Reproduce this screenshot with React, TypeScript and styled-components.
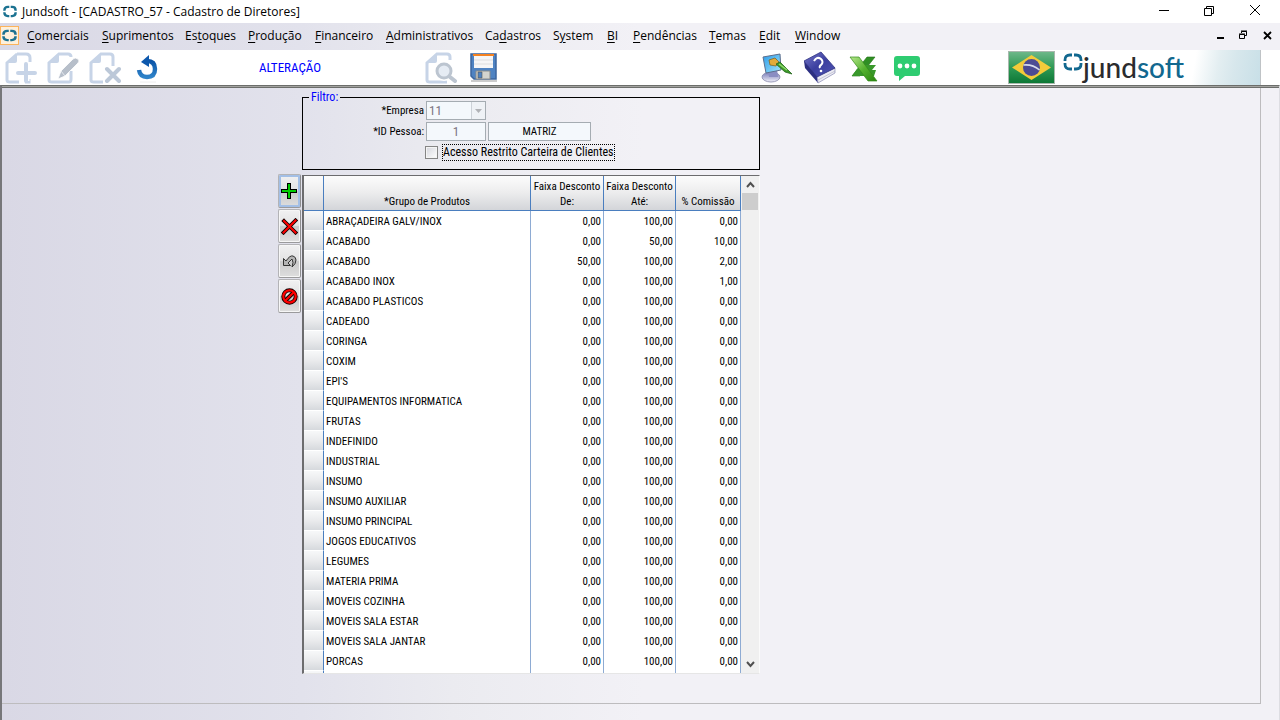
import React from "react";
import styled, { createGlobalStyle, css } from "styled-components";

const uiFont = `"Open Sans", "Noto Sans", sans-serif`;
const formFont = `"Roboto Condensed", "Liberation Sans Narrow", Arial, sans-serif`;

const GlobalStyle = createGlobalStyle`
  *, *::before, *::after { box-sizing: border-box; }
  body { margin: 0; background: #f2f1f6; color: #000; }
  button, input, select { margin: 0; padding: 0; font: inherit; color: inherit; border-radius: 0; }
`;

const shade = css`
  background: linear-gradient(90deg, #d9d8e5 0, #e2e2ec 300px, #ebebf0 450px, #f2f1f6 640px);
`;

const Window = styled.div`
  display: flex;
  flex-direction: column;
  min-height: 100vh;
`;

const TitleBar = styled.header`
  display: flex;
  align-items: center;
  height: 23px;
  padding: 0 18px 0 3px;
  background: #fff;
  font: 12px/16px ${uiFont};
`;

const Title = styled.h1`
  flex: 1;
  margin: 0 0 0 5px;
  font: inherit;
`;

const Controls = styled.div<{ $gap: number }>`
  display: flex;
  align-items: center;
  gap: ${(p) => p.$gap}px;
`;

const GlyphButton = styled.button`
  display: flex;
  width: 13px;
  height: 13px;
  border: 0;
  background: none;
`;

const MenuBar = styled.nav`
  ${shade}
  display: flex;
  align-items: center;
  height: 27px;
  padding: 0 6px 2px 0;
  font: 12px/16px ${uiFont};
`;

const MenuIcon = styled.button`
  display: flex;
  align-items: center;
  justify-content: center;
  width: 19px;
  height: 19px;
  border: 1px solid #fcb45c;
  background: #fdf0dc;
`;

const MenuList = styled.ul`
  display: flex;
  flex: 1;
  gap: 16px;
  margin: 0 0 0 8px;
  padding: 0;
  list-style: none;
`;

const MenuItem = styled.li<{ $width: number }>`
  width: ${(p) => p.$width}px;
  white-space: nowrap;
`;

const MenuLink = styled.a`
  color: #000;
  text-decoration: none;
  u { text-underline-offset: 2px; }
`;

const ToolBar = styled.div`
  display: flex;
  align-items: center;
  height: 35px;
  padding: 0 19px 0 5px;
  background: #fff;
`;

const ToolGroup = styled.div<{ $gap: number }>`
  display: flex;
  gap: ${(p) => p.$gap}px;
`;

const ToolButton = styled.button`
  display: flex;
  width: 32px;
  height: 34px;
  border: 0;
  background: none;
`;

const Status = styled.output`
  width: 262px;
  padding-right: 8px;
  color: #00f;
  font: 13px/16px ${formFont};
  text-align: center;
`;

const Spacer = styled.div`
  flex: 1;
`;

const Flag = styled.button`
  display: flex;
  width: 47px;
  height: 33px;
  margin: 0 7px 0 86px;
  border: 0;
  background: none;
`;

const Brand = styled.div`
  display: flex;
  width: 199px;
  height: 35px;
  padding: 2px 0 0 1px;
  border-right: 1px solid #bfc3c6;
  background: linear-gradient(100deg, #fff 66%, #e3eef1 78%, #d7e7ec 86%, #c8dfe7 100%);
`;

const BrandName = styled.span`
  color: #2b2b2d;
  font: 500 28px/30px "Lato", sans-serif;
  em { color: #12688f; font-style: normal; }
`;

const Workspace = styled.main`
  ${shade}
  display: flex;
  flex: 1;
  padding: 2px 18px 16px 0;
  border-top: 1px solid #6c6e6b;
  border-left: 2px solid #77777a;
  border-right: 1px solid #dddde2;
  box-shadow: inset 0 1px #a3a3a0, inset 0 2px #6c6e6b;
`;

const Page = styled.div`
  flex: 1;
  padding: 3px 0 29px 276px;
  border-right: 1px solid #bdbcbe;
  border-bottom: 1px solid #bdbcbe;
`;

const Form = styled.form`
  display: grid;
  grid-template-columns: 24px 458px;
  row-gap: 5px;
  font: 11px/14px ${formFont};
`;

const Filter = styled.fieldset`
  grid-column: 2;
  min-width: 0;
  height: 79px;
  margin: 0;
  padding: 0;
  border: 1px solid #000;
`;

const Legend = styled.legend`
  margin: 0 0 -3px 6px;
  padding: 0 2px;
  color: #00f;
  font-size: 12px;
  line-height: 12px;
`;

const FieldRow = styled.div`
  display: grid;
  grid-template-columns: 121px 60px 103px;
  column-gap: 2px;
  align-items: center;
  height: 21px;
`;

const FieldLabel = styled.label`
  text-align: right;
`;

const field = css`
  width: 100%;
  height: 19px;
  border: 1px solid #a5acb2;
  background: #f4f8fc;
`;

const TextField = styled.input<{ $dim?: boolean }>`
  ${field}
  text-align: center;
  color: ${(p) => (p.$dim ? "#7d7482" : "#000")};
  font-size: ${(p) => (p.$dim ? 13 : 11)}px;
`;

const SelectBox = styled.div`
  position: relative;
  display: flex;
`;

const Select = styled.select`
  ${field}
  appearance: none;
  padding-left: 2px;
  color: #7d7482;
  font-size: 13px;
  line-height: 16px;
  opacity: 1;
`;

const SelectArrow = styled.span`
  position: absolute;
  top: 1px;
  right: 1px;
  display: flex;
  align-items: center;
  justify-content: center;
  width: 14px;
  height: 17px;
  border-left: 1px solid #cdd2d8;
  background: #eff2f6;
  pointer-events: none;
`;

const CheckRow = styled.div`
  display: flex;
  align-items: center;
  gap: 4px;
  height: 20px;
  padding-left: 122px;
`;

const CheckBox = styled.input`
  appearance: none;
  width: 13px;
  height: 13px;
  border: 1px solid #858585;
  background: linear-gradient(135deg, #d4d5dc, #fff);
  box-shadow: inset 0 0 0 1px #f4f4f4;
`;

const CheckLabel = styled.label`
  width: 173px;
  height: 17px;
  border: 1px dotted #000;
  font-size: 12px;
  line-height: 15px;
  white-space: nowrap;
`;

const SideBar = styled.div`
  display: flex;
  flex-direction: column;
  gap: 1px;
  margin-top: -1px;
`;

const SideButton = styled.button<{ $active?: boolean }>`
  display: flex;
  align-items: center;
  justify-content: center;
  width: 23px;
  height: 34px;
  border: 1px solid #b3b3b6;
  border-right-color: #8e8e90;
  border-bottom-color: #9a9a9c;
  border-radius: 2px;
  background: linear-gradient(#f1f1f2 0, #e2e2e3 48%, #c9c9ca 52%, #dedede 100%);
  box-shadow: inset 0 0 0 ${(p) => (p.$active ? "2px #a3bfe6" : "1px #f6f6f6")};
`;

const Grid = styled.div`
  display: flex;
  height: 499px;
  border: 2px solid #6c6c6e;
  border-top-width: 1px;
  border-right: 1px solid #fbfbfb;
  border-bottom: 1px solid #e6e6e6;
  background: #fff;
  overflow: hidden;
`;

const TableView = styled.div`
  flex: 1;
  overflow: hidden;
`;

const Table = styled.table`
  width: 437px;
  border-spacing: 0;
  table-layout: fixed;
`;

const HeadCell = styled.th`
  height: 35px;
  padding: 2px 1px 1px;
  border-right: 1px solid #4a7ebf;
  border-bottom: 1px solid #4a7ebf;
  background: linear-gradient(#fcfcfc, #ececed 50%, #d3d5d9);
  font-weight: normal;
  line-height: 15px;
  text-align: center;
  vertical-align: bottom;
  white-space: nowrap;
`;

const Cell = styled.td<{ $number?: boolean }>`
  height: 20px;
  padding: 2px 2px 0;
  border-right: 1px solid #8eabd3;
  text-align: ${(p) => (p.$number ? "right" : "left")};
  white-space: nowrap;
`;

const Selector = styled.td`
  height: 20px;
  padding: 0;
  border-right: 1px solid #4a7ebf;
  border-bottom: 1px solid #fff;
  background: linear-gradient(#f7f8f9, #eaebed 50%, #d6d9dd);
`;

const ScrollBar = styled.div`
  display: flex;
  flex-direction: column;
  width: 18px;
  padding: 0 1px;
  background: #f0f0f0;
`;

const ScrollButton = styled.button`
  display: flex;
  align-items: center;
  justify-content: center;
  height: 17px;
  border: 0;
  background: none;
`;

const Thumb = styled.div`
  flex: 1;
  &::before {
    content: "";
    display: block;
    height: 17px;
    background: #cdcdcd;
  }
`;

function Ring({ width, height, stroke = 3.4, color = "#1b7291" }: { width: number; height: number; stroke?: number; color?: string }) {
  return (
    <svg width={width} height={height} viewBox="0 0 20 20" fill="none" stroke={color} strokeWidth={stroke} preserveAspectRatio="none">
      <path d="M9 3H7Q2 3 2 8V9M11 3h2q5 0 5 5v1M9 17H7q-5 0-5-5v-1M11 17h2q5 0 5-5v-1" />
    </svg>
  );
}

const NewIcon = () => (
  <svg width="32" height="34" viewBox="0 0 32 34">
    <path d="M12 3h9q4 0 4 4v4M12 3 2 12v17q0 2 3 2h9M20 31h4v-3" fill="none" stroke="#c7d4e7" strokeWidth="3" />
    <path d="M12 2 1 12h9q2 0 2-2z" fill="#c7d4e7" />
    <path d="M21 13v17M13 22h17" stroke="#fff" strokeWidth="7" />
    <path d="M21 13v17M13 22h17" stroke="#c7d4e7" strokeWidth="4" strokeLinecap="round" />
  </svg>
);

const EditIcon = () => (
  <svg width="32" height="34" viewBox="0 0 32 34">
    <path d="M24 6q0-3-3-3h-9L2 12v17q0 2 3 2h17q2 0 2-3v-8" fill="none" stroke="#c7d4e7" strokeWidth="3" />
    <path d="M12 2 1 12h9q2 0 2-2z" fill="#c7d4e7" />
    <path d="m11 28 3-8L26 8q2-2 5 0 2 2 0 4L18 25z" fill="#b7bfca" stroke="#fff" strokeWidth=".8" />
    <path d="m14 20 4 5" stroke="#e6eaf0" />
  </svg>
);

const DeleteIcon = () => (
  <svg width="32" height="34" viewBox="0 0 32 34">
    <path d="M24 15V6q0-3-3-3h-9L2 12v17q0 2 3 2h9" fill="none" stroke="#c7d4e7" strokeWidth="3" />
    <path d="M12 2 1 12h9q2 0 2-2z" fill="#c7d4e7" />
    <path d="m18 18 12 12M30 18 18 30" stroke="#bcc8d8" strokeWidth="4" strokeLinecap="round" />
  </svg>
);

const UndoIcon = () => (
  <svg width="32" height="34" viewBox="0 0 32 34">
    <defs>
      <linearGradient id="undo" x2="0" y2="1">
        <stop stopColor="#0a54a8" />
        <stop offset="1" stopColor="#2f83c9" />
      </linearGradient>
    </defs>
    <path d="M16 10q8 0 8 8 0 8-8 8-7 0-8-7" fill="none" stroke="url(#undo)" strokeWidth="4.4" />
    <path d="m18 4-8 7 8 5z" fill="#0d58ad" />
    <path d="M9 31h16" stroke="#eee" />
  </svg>
);

const SearchIcon = () => (
  <svg width="32" height="34" viewBox="0 0 32 34">
    <path d="M25 9V6q0-3-3-3H12L2 12v17q0 2 3 2h17" fill="none" stroke="#c7d4e7" strokeWidth="3" />
    <path d="M12 2 1 12h9q2 0 2-2z" fill="#c7d4e7" />
    <circle cx="19" cy="20" r="10" fill="#fff" />
    <circle cx="19" cy="20" r="7" fill="#e6ecf4" stroke="#bcc5d0" strokeWidth="3" />
    <path d="m25 26 5 4" stroke="#bcc5d0" strokeWidth="4" strokeLinecap="round" />
  </svg>
);

const SaveIcon = () => (
  <svg width="32" height="34" viewBox="0 0 32 34">
    <path d="M4 30h26" stroke="#ccc" strokeWidth="2" />
    <path d="M4 3h25v25H7l-3-3z" fill="#4f83c2" stroke="#3c669e" strokeWidth="1.5" />
    <path d="M7 4h19v13H7z" fill="#f6f6f7" />
    <path d="M6 3h21v2H6z" fill="#f58220" />
    <path d="M7 9h19M7 13h19" stroke="#dededf" />
    <path d="M9 20h14v8H9z" fill="#d4d4ce" stroke="#8b8d8c" />
    <path d="M11 21h4v6h-4z" fill="#4f83c2" stroke="#555" strokeWidth=".6" />
  </svg>
);

const ThemeIcon = () => (
  <svg width="32" height="34" viewBox="0 0 32 34">
    <defs>
      <linearGradient id="screen" x2="1" y2="1">
        <stop stopColor="#2a9be8" />
        <stop offset="1" stopColor="#a4e5fb" />
      </linearGradient>
      <linearGradient id="base" x2="0" y2="1">
        <stop stopColor="#7377b5" />
        <stop offset="1" stopColor="#f0f0f8" />
      </linearGradient>
    </defs>
    <ellipse cx="10" cy="26" rx="9" ry="5" fill="url(#base)" stroke="#8587a9" strokeWidth=".8" />
    <path d="m7 19 9-1 1 8H8z" fill="#8a8dc2" />
    <path d="m2 6 17-3 1 16-15 3z" fill="url(#screen)" stroke="#5e6f8d" />
    <path d="m8 9 6-2 4 4-3 4-6-1z" fill="#e2ab3a" stroke="#7d5d19" strokeWidth=".7" />
    <path d="m15 13 4-2 12 12-7-2z" fill="#3c9a29" stroke="#23661c" strokeWidth=".8" />
    <path d="m18 13 8 6" stroke="#91d96e" strokeWidth="1.5" />
  </svg>
);

const HelpIcon = () => (
  <svg width="32" height="34" viewBox="0 0 32 34">
    <defs>
      <linearGradient id="cover" x2="1" y2="1">
        <stop stopColor="#7778c9" />
        <stop offset=".5" stopColor="#3b3f9f" />
        <stop offset="1" stopColor="#5054b4" />
      </linearGradient>
    </defs>
    <path d="m0 10 13 15 1 7L1 17z" fill="#2c2f82" />
    <path d="m13 25 18-8v5l-17 10z" fill="#ececf4" stroke="#7778a8" strokeWidth=".6" />
    <path d="m14 29 17-9" stroke="#a9a9bd" strokeWidth=".6" />
    <path d="m0 10 17-9 14 16-18 9z" fill="url(#cover)" stroke="#2f3283" strokeWidth=".8" />
    <path d="M10 10q3-5 7-2 3 3 0 6-2 1-1 3" fill="none" stroke="#fff" strokeWidth="2" />
    <circle cx="17" cy="20" r="1.3" fill="#fff" />
  </svg>
);

const ExcelIcon = () => (
  <svg width="32" height="34" viewBox="0 0 32 34">
    <defs>
      <linearGradient id="leaf" x2="1" y2="1">
        <stop stopColor="#b7e88d" />
        <stop offset=".5" stopColor="#56b330" />
        <stop offset="1" stopColor="#27840e" />
      </linearGradient>
    </defs>
    <path d="M20 6h8L13 25H5z" fill="#2f8f24" stroke="#207014" strokeWidth=".6" />
    <path d="M18 14h11l-4 5h4l-2 6H5l5-7z" fill="#39982b" />
    <path d="M3 6h9l18 24h-9z" fill="url(#leaf)" stroke="#338b1b" strokeWidth=".7" />
  </svg>
);

const ChatIcon = () => (
  <svg width="32" height="34" viewBox="0 0 32 34">
    <path d="M7 5h20q3 0 3 3v14q0 3-3 3H15l-6 5v-5H7q-3 0-3-3V8q0-3 3-3z" fill="#2ecc71" />
    <circle cx="10" cy="15" r="2.4" fill="#fff" />
    <circle cx="17" cy="15" r="2.4" fill="#fff" />
    <circle cx="24" cy="15" r="2.4" fill="#fff" />
  </svg>
);

const BrazilFlag = () => (
  <svg width="47" height="33" viewBox="0 0 47 33">
    <defs>
      <linearGradient id="green" x2="0" y2="1">
        <stop stopColor="#6fb88a" />
        <stop offset=".5" stopColor="#2f9a55" />
        <stop offset="1" stopColor="#0c7735" />
      </linearGradient>
    </defs>
    <rect x=".5" y=".5" width="46" height="32" fill="url(#green)" stroke="#a9b8ae" />
    <path d="M4 16.5 23.5 4 43 16.5 23.5 29z" fill="#f3cb3a" />
    <circle cx="23.5" cy="16.5" r="8.5" fill="#4c4b94" />
    <path d="M15.500 14q9-1 16 5" fill="none" stroke="#d8dcec" strokeWidth="1.6" />
  </svg>
);

const PlusIcon = () => (
  <svg width="17" height="17" viewBox="0 0 17 17" shapeRendering="crispEdges">
    <path d="M6.5 .5h3v6h6v3h-6v6h-3v-6h-6v-3h6z" fill="#0c0" stroke="#000" />
  </svg>
);

const CrossIcon = () => (
  <svg width="17" height="17" viewBox="0 0 17 17" strokeLinecap="square">
    <path d="m3 3 11.500 11.500M14.500 2.500 2.500 14.500" stroke="#100" strokeWidth="3.8" />
    <path d="m3 3 11.500 11.500M14.500 2.500 2.500 14.500" stroke="#f00" strokeWidth="2" />
  </svg>
);

const RevertIcon = () => (
  <svg width="15" height="13" viewBox="0 0 15 13">
    <path d="M1.500 3.500v7h7L6 8l4-4q2 3 0 8 4-3 4-7 0-3-3-4Q8 0 4 6z" fill="#b4b4b4" stroke="#333" />
  </svg>
);

const BlockIcon = () => (
  <svg width="17" height="17" viewBox="0 0 17 17" fill="none">
    <circle cx="8.5" cy="8.5" r="6.2" stroke="#100" strokeWidth="4" />
    <path d="m4.500 12.500 8-8" stroke="#100" strokeWidth="4" />
    <circle cx="8.5" cy="8.5" r="6.2" stroke="#f00" strokeWidth="2.2" />
    <path d="m4.500 12.500 8-8" stroke="#f00" strokeWidth="2.2" />
  </svg>
);

const Chevron = ({ down }: { down?: boolean }) => (
  <svg width="9" height="7" viewBox="0 0 9 7" fill="none" stroke="#505050" strokeWidth="2">
    <path d={down ? "m1 1 3.500 4L8 1" : "m1 6 3.500-4L8 6"} />
  </svg>
);

const menus: [string, string, string, number][] = [
  ["", "C", "omerciais", 59],
  ["", "S", "uprimentos", 67],
  ["Es", "t", "oques", 47],
  ["", "P", "rodução", 51],
  ["", "F", "inanceiro", 55],
  ["", "A", "dministrativos", 83],
  ["Ca", "d", "astros", 52],
  ["S", "y", "stem", 38],
  ["", "B", "I", 10],
  ["", "P", "endências", 60],
  ["", "T", "emas", 34],
  ["", "E", "dit", 20],
  ["", "W", "indow", 44],
];

const rows: [string, string, string, string][] = [
  ["ABRAÇADEIRA GALV/INOX", "0,00", "100,00", "0,00"],
  ["ACABADO", "0,00", "50,00", "10,00"],
  ["ACABADO", "50,00", "100,00", "2,00"],
  ["ACABADO INOX", "0,00", "100,00", "1,00"],
  ...[
    "ACABADO PLASTICOS",
    "CADEADO",
    "CORINGA",
    "COXIM",
    "EPI'S",
    "EQUIPAMENTOS INFORMATICA",
    "FRUTAS",
    "INDEFINIDO",
    "INDUSTRIAL",
    "INSUMO",
    "INSUMO AUXILIAR",
    "INSUMO PRINCIPAL",
    "JOGOS EDUCATIVOS",
    "LEGUMES",
    "MATERIA PRIMA",
    "MOVEIS COZINHA",
    "MOVEIS SALA ESTAR",
    "MOVEIS SALA JANTAR",
    "PORCAS",
  ].map((name): [string, string, string, string] => [name, "0,00", "100,00", "0,00"]),
];

export default function App() {
  return (
    <Window>
      <GlobalStyle />
      <TitleBar>
        <Ring width={14} height={13} />
        <Title>Jundsoft - [CADASTRO_57 - Cadastro de Diretores]</Title>
        <Controls $gap={33}>
          <GlyphButton type="button" aria-label="Minimizar">
            <svg width="13" height="13" stroke="#000"><path d="M2 5.500h10" /></svg>
          </GlyphButton>
          <GlyphButton type="button" aria-label="Restaurar">
            <svg width="13" height="13" fill="none" stroke="#000"><path d="M1.500 3.500h7v7h-7zM3.500 3V1.500h7v7H9" /></svg>
          </GlyphButton>
          <GlyphButton type="button" aria-label="Fechar">
            <svg width="13" height="13" stroke="#000"><path d="m1 0 10 10M11 0 1 10" /></svg>
          </GlyphButton>
        </Controls>
      </TitleBar>

      <MenuBar>
        <MenuIcon type="button" aria-label="Janela"><Ring width={15} height={13} /></MenuIcon>
        <MenuList>
          {menus.map(([before, key, after, width]) => (
            <MenuItem key={before + key + after} $width={width}>
              <MenuLink href="#">{before}<u>{key}</u>{after}</MenuLink>
            </MenuItem>
          ))}
        </MenuList>
        <Controls $gap={10}>
          <GlyphButton type="button" aria-label="Minimizar janela">
            <svg width="13" height="13" stroke="#000" strokeWidth="2"><path d="M2 9h7" /></svg>
          </GlyphButton>
          <GlyphButton type="button" aria-label="Restaurar janela">
            <svg width="13" height="13" fill="none" stroke="#000"><path d="M1.500 5.500h5v4h-5zM1 5h6M3.500 4V2.500h5v4H7M3 2h6" /></svg>
          </GlyphButton>
          <GlyphButton type="button" aria-label="Fechar janela">
            <svg width="13" height="13" stroke="#000" strokeWidth="1.8"><path d="m3 3 7 7M10 3 3 10" /></svg>
          </GlyphButton>
        </Controls>
      </MenuBar>

      <ToolBar>
        <ToolGroup $gap={10}>
          <ToolButton aria-label="Novo" disabled><NewIcon /></ToolButton>
          <ToolButton aria-label="Editar" disabled><EditIcon /></ToolButton>
          <ToolButton aria-label="Excluir" disabled><DeleteIcon /></ToolButton>
          <ToolButton aria-label="Desfazer"><UndoIcon /></ToolButton>
        </ToolGroup>
        <Status>ALTERAÇÃO</Status>
        <ToolGroup $gap={10}>
          <ToolButton aria-label="Pesquisar" disabled><SearchIcon /></ToolButton>
          <ToolButton aria-label="Salvar"><SaveIcon /></ToolButton>
        </ToolGroup>
        <Spacer />
        <ToolGroup $gap={11}>
          <ToolButton aria-label="Temas"><ThemeIcon /></ToolButton>
          <ToolButton aria-label="Ajuda"><HelpIcon /></ToolButton>
          <ToolButton aria-label="Excel"><ExcelIcon /></ToolButton>
          <ToolButton aria-label="Mensagens"><ChatIcon /></ToolButton>
        </ToolGroup>
        <Flag type="button" aria-label="Idioma"><BrazilFlag /></Flag>
        <Brand>
          <Ring width={20} height={20} stroke={2.8} color="#12688f" />
          <BrandName>jund<em>soft</em></BrandName>
        </Brand>
      </ToolBar>

      <Workspace>
        <Page>
          <Form>
            <Filter>
              <Legend>Filtro:</Legend>
              <FieldRow>
                <FieldLabel htmlFor="empresa">*Empresa</FieldLabel>
                <SelectBox>
                  <Select id="empresa" disabled defaultValue="11">
                    <option>11</option>
                  </Select>
                  <SelectArrow>
                    <svg width="7" height="4"><path d="M0 0h7L3.500 4z" fill="#b0b2b6" /></svg>
                  </SelectArrow>
                </SelectBox>
              </FieldRow>
              <FieldRow>
                <FieldLabel htmlFor="pessoa">*ID Pessoa:</FieldLabel>
                <TextField id="pessoa" $dim readOnly value="1" />
                <TextField aria-label="Nome" readOnly value="MATRIZ" />
              </FieldRow>
              <CheckRow>
                <CheckBox id="restrito" type="checkbox" />
                <CheckLabel htmlFor="restrito">Acesso Restrito Carteira de Clientes</CheckLabel>
              </CheckRow>
            </Filter>

            <SideBar>
              <SideButton type="button" aria-label="Adicionar" $active><PlusIcon /></SideButton>
              <SideButton type="button" aria-label="Remover"><CrossIcon /></SideButton>
              <SideButton type="button" aria-label="Reverter"><RevertIcon /></SideButton>
              <SideButton type="button" aria-label="Cancelar"><BlockIcon /></SideButton>
            </SideBar>

            <Grid>
              <TableView>
                <Table>
                  <colgroup>
                    <col width="20" />
                    <col width="207" />
                    <col width="73" />
                    <col width="72" />
                    <col width="65" />
                  </colgroup>
                  <thead>
                    <tr>
                      <HeadCell />
                      <HeadCell>*Grupo de Produtos</HeadCell>
                      <HeadCell>Faixa Desconto<br />De:</HeadCell>
                      <HeadCell>Faixa Desconto<br />Até:</HeadCell>
                      <HeadCell>% Comissão</HeadCell>
                    </tr>
                  </thead>
                  <tbody>
                    {rows.map(([name, from, to, rate], i) => (
                      <tr key={i}>
                        <Selector />
                        <Cell>{name}</Cell>
                        <Cell $number>{from}</Cell>
                        <Cell $number>{to}</Cell>
                        <Cell $number>{rate}</Cell>
                      </tr>
                    ))}
                    <tr>
                      <Selector />
                      <Cell />
                      <Cell />
                      <Cell />
                      <Cell />
                    </tr>
                  </tbody>
                </Table>
              </TableView>
              <ScrollBar>
                <ScrollButton type="button" aria-label="Rolar para cima"><Chevron /></ScrollButton>
                <Thumb />
                <ScrollButton type="button" aria-label="Rolar para baixo"><Chevron down /></ScrollButton>
              </ScrollBar>
            </Grid>
          </Form>
        </Page>
      </Workspace>
    </Window>
  );
}
